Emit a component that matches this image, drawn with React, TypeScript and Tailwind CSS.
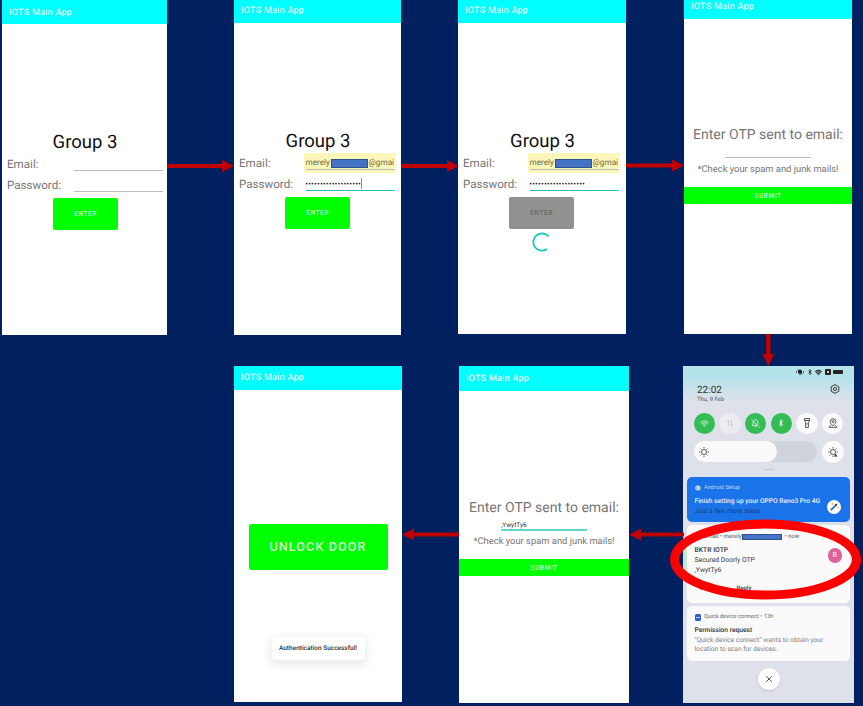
import React from "react";
import { Wifi, BellOff, Bluetooth, Settings, X } from "lucide-react";

const RED = "#c00000";

function AppBar({ className, children }: { className: string; children?: React.ReactNode }) {
  return (
    <div className={"bg-[#00ffff] pl-[7px] text-[9px] leading-[12px] font-medium tracking-[0.25px] text-[#dcfafa] " + className}>
      {children ?? "IOTS Main App"}
    </div>
  );
}

function Login({ bar, screen, filled, busy }: { bar: string; screen: string; filled?: boolean; busy?: boolean }) {
  return (
    <section className={"flex flex-col bg-white " + screen}>
      <AppBar className={bar} />
      <h1 className="mt-[106px] h-6 pl-[1px] text-center text-[18.5px] leading-6 text-[#111]">Group 3</h1>
      <div className="flex h-[21px] pl-[5px] text-[11.6px] leading-4 text-[#757575]">
        <div className="w-[65px] pt-[2px]">Email:</div>
        <div className={"h-5 w-[92px] px-[1.5px] " + (filled ? "bg-[#fcf6b8]" : "")}>
          <div className="flex h-[17px] items-center border-b border-[#bdbdbd] pt-[4px] text-[8.2px] text-[#6b684c]">
            {filled && (
              <>
                <span className="w-[25px]">merely</span>
                <span className="mr-px h-[9px] w-[37px] border border-[#2f528f] bg-[#4472c4]" />
                <span>@gmai</span>
              </>
            )}
          </div>
        </div>
      </div>
      <div className="flex h-[21px] pl-[5px] text-[11.6px] leading-4 text-[#757575]">
        <div className="w-[65px] pt-[2px]">Password:</div>
        <div className="h-5 w-[92px] px-[1.5px]">
          <div className={"flex h-[17px] items-center border-b pt-1 text-[6.5px] font-bold tracking-[0.6px] text-[#111] " + (filled ? "border-[#1fc4b6]" : "border-[#bdbdbd]")}>
            {filled && "•••••••••••••••••••"}
            {filled && !busy && <span className="-mt-0.5 h-[11px] w-px bg-[#1fc4b6]" />}
          </div>
        </div>
      </div>
      <button
        className={
          "mt-0.5 ml-[51px] h-8 w-[65px] rounded-[2px] pt-px text-[6.4px] font-medium tracking-[0.6px] " +
          (busy ? "bg-[#919191] text-[#666]" : "bg-[#00ff00] text-[#c8f7c8]")
        }
      >
        ENTER
      </button>
      {busy && (
        <svg className="mt-[3px] ml-[73px] size-5" viewBox="0 0 20 20" fill="none" stroke="#25c9b7" strokeWidth="1.9">
          <path d="M17.6 4.6A8.6 8.6 0 1 0 16 17" />
        </svg>
      )}
    </section>
  );
}

function Otp({ bar, screen, body, code }: { bar: string; screen: string; body: string; code?: string }) {
  return (
    <section className={"flex flex-col bg-white text-center whitespace-nowrap text-[#757575] " + screen}>
      <AppBar className={"text-left " + bar} />
      <h1 className={"h-[129px] text-[14px] leading-5 " + body}>Enter OTP sent to email:</h1>
      <div className="mx-auto h-[9px] w-[86px] text-left text-[6.5px] leading-[10px] text-[#333]">{code}</div>
      <div className={"mx-auto w-[86px] " + (code ? "h-0.5 bg-[#5fd6cc]" : "h-px bg-[#bdbdbd]")} />
      <p className={"h-[25px] text-[9.4px] leading-4 " + (code ? "mt-[3px]" : "mt-[4px]")}>*Check your spam and junk mails!</p>
      <button className="h-[17px] bg-[#00ff00] text-[6.5px] leading-[18px] font-medium tracking-[0.6px] text-[#c8f7c8]">SUBMIT</button>
    </section>
  );
}

function Unlock() {
  return (
    <section className="flex h-[336px] w-[168px] flex-col bg-white whitespace-nowrap">
      <AppBar className="h-6 pt-[6px]" />
      <button className="mt-[134px] ml-[14.5px] h-[46px] w-[139px] rounded-[2px] bg-[#00ff00] pt-px text-[12.5px] font-medium tracking-[1.15px] text-[#d5f5d5]">
        UNLOCK DOOR
      </button>
      <div className="mx-auto mt-[67px] h-[23px] w-[93px] rounded-[4px] bg-white text-center text-[6.5px] leading-[23px] font-medium text-[#333] shadow-[0_3px_8px_3px_rgba(0,0,0,0.07)]">
        Authentication Successful!
      </div>
    </section>
  );
}

function Toggle({ tone, children }: { tone: string; children: React.ReactNode }) {
  return <div className={"flex size-[21.5px] items-center justify-center rounded-full " + tone}>{children}</div>;
}

// Outline glyph on a 12-unit grid, in the stroke weight of the quick settings.
function Glyph({ size, d, children }: { size: number; d: string; children?: React.ReactNode }) {
  return (
    <svg width={size} height={size} viewBox="0 0 12 12" fill="none" stroke="currentColor" strokeWidth="0.95" strokeLinejoin="round">
      <path d={d} />
      {children}
    </svg>
  );
}

const SUN_RAYS = "M6 0v1.700M6 10.300V12M0 6h1.700M10.300 6H12M1.760 1.760l1.200 1.200M9.040 9.040l1.200 1.200M1.760 10.240l1.200-1.200M9.040 2.960l1.200-1.200";

function Notifications() {
  return (
    <section className="relative flex h-[337px] w-[171px] flex-col bg-[#dfe1ea] bg-linear-to-b from-[#b5e3ea] from-3% to-[#dfe1ea] to-11% px-1 whitespace-nowrap text-[#333]">
      <div className="absolute top-[180px] left-0 h-[32px] w-1 bg-[#c4e6d0]" />
      <div className="flex h-3 shrink-0 items-center justify-end gap-[2.5px] pr-[7px] text-[#222]">
        <svg width="8" height="6" viewBox="0 0 8 6" fill="#222">
          <path d="M2 4.500V2.500a2 2 0 0 1 4 0v2z" />
          <circle cx="4" cy="5.200" r=".8" />
          <path d="M.5 2v2M7.500 2v2M1.200.5l5.600 5" stroke="#222" strokeWidth=".7" />
        </svg>
        <Bluetooth size={6} strokeWidth={3} />
        <Wifi size={7} strokeWidth={3.5} />
        <span className="flex h-[5.5px] w-[6px] items-center justify-center rounded-[1px] bg-[#222]"><span className="size-0.5 rounded-full bg-white" /></span>
        <span className="h-[4.5px] w-[10px] rounded-[1px] bg-[#222]" />
      </div>
      <div className="mt-1 flex h-[29px] shrink-0 justify-between pr-[10.5px] pl-[10px]">
        <div>
          <div className="mt-[3px] text-[10px] leading-[11px]">22:02</div>
          <div className="text-[5.9px] leading-[9px] text-[#555]">Thu, 9 Feb</div>
        </div>
        <svg className="mt-0.5 size-[10px]" viewBox="0 0 10 10" fill="none" stroke="#333" strokeWidth="0.95">
          <path d="M5 .6l3.800 2.200v4.400L5 9.400 1.200 7.200V2.800z" strokeLinejoin="round" />
          <circle cx="5" cy="5" r="1.600" />
        </svg>
      </div>
      <div className="mt-[1.5px] flex justify-between pr-[6.5px] pl-[6.5px] text-[#333]">
        <Toggle tone="bg-[#34bd55] text-white"><Wifi size={9} /></Toggle>
        <Toggle tone="bg-[#ebecf1] text-[#b9bbc2]">
          <Glyph size={8} d="M4 10.500v-9L1.500 4.500M8 1.500v9l2.500-3" />
        </Toggle>
        <Toggle tone="bg-[#34bd55] text-white"><BellOff size={9} /></Toggle>
        <Toggle tone="bg-[#34bd55] text-white"><Bluetooth size={8} strokeWidth={2.5} /></Toggle>
        <Toggle tone="bg-[#fafafa]">
          <Glyph size={10} d="M3 .6h6v2.600l-1.300 2v6.200H4.300V5.200L3 3.200zM3 3h6M6 6v2" />
        </Toggle>
        <Toggle tone="bg-[#fafafa]">
          <Glyph size={10} d="M6 9.300C3.600 7.300 2.600 6 2.600 4.300a3.400 3.400 0 0 1 6.800 0C9.400 6 8.400 7.300 6 9.300zM3.200 8.600L1.400 11.200h9.200L8.800 8.600">
            <circle cx="6" cy="4.300" r="1.200" />
          </Glyph>
        </Toggle>
      </div>
      <div className="mt-[7px] flex items-center justify-between pr-[6.5px] pl-[6.5px]">
        <div className="h-[21px] w-[123px] overflow-hidden rounded-full bg-[#d1d3dc]">
          <div className="flex h-full w-[83px] items-center rounded-r-full bg-[#fafafa] pl-[5px]">
            <Glyph size={10} d={SUN_RAYS}><circle cx="6" cy="6" r="3" /></Glyph>
          </div>
        </div>
        <Toggle tone="bg-[#fafafa]">
          <Glyph size={10} d={SUN_RAYS}>
            <circle cx="6" cy="6" r="3" />
            <path d="M7 11.800l2-5 2.600 5z" fill="#333" stroke="#fafafa" strokeWidth=".5" />
          </Glyph>
        </Toggle>
      </div>
      <div className="mx-auto mt-[6px] h-px w-[10px] shrink-0 bg-[#c3c5cd]" />
      <article className="mt-[7px] flex h-[45px] shrink-0 justify-between rounded-[5px] bg-[#1a73e8] pr-[9px] pl-[7.5px] text-[6.65px] leading-[10px]">
        <div className="w-[125px]">
          <div className="mt-[7px] flex h-[9px] items-center gap-[3.5px] text-[5.7px] text-[#bcd6f9]">
            <Settings size={6} strokeWidth={4} className="text-white" />Android Setup
          </div>
          <div className="mt-[3px] font-medium text-[#e8f0fe]">Finish setting up your OPPO Reno3 Pro 4G</div>
          <div className="text-[6.7px] text-[#123f80]">Just a few more steps</div>
        </div>
        <div className="mt-[23px] flex size-[14px] shrink-0 items-center justify-center rounded-full bg-white">
          <svg width="11" height="11" viewBox="0 0 11 11" fill="none">
            <path d="M1.800 9.200l5.600-5.600" stroke="#3a6fc4" strokeWidth="1.900" />
            <path d="M6.600 4.400l1.200-1.200" stroke="#173f86" strokeWidth="1.900" />
            <path d="M3.500 2v2M2.500 3h2M9.300 5.800v1.800M8.400 6.700h1.800M9 1v1.400" stroke="#e0a92e" strokeWidth=".8" />
          </svg>
        </div>
      </article>
      <article className="mt-[3.5px] flex h-[78px] shrink-0 justify-between rounded-[5px] bg-[#fafafa] pr-[8px] pl-[7.5px] text-[6.8px] leading-[10px]">
        <div>
          <div className="mt-[7px] flex h-[9px] items-center pl-[8px] text-[6px] text-[#555]">
            <span className="w-[39px] text-right">Gmail • merely</span>
            <span className="h-[6px] w-[40px] border border-[#2f528f] bg-[#4472c4]" />
            <span className="pl-[3px]">• now</span>
          </div>
          <div className="mt-[3.5px] font-medium">BKTR IOTP</div>
          <div>Secured Doorly OTP</div>
          <div>,YwytTy6</div>
          <div className="mt-[9.5px] flex pl-[6px] text-[6px] font-medium"><span className="w-[36px]">Archive</span><span>Reply</span></div>
        </div>
        <div className="mt-[23px] size-[14.5px] rounded-full bg-[#e0609a] text-center text-[7px] leading-[14.5px] text-white">B</div>
      </article>
      <article className="mt-[2.5px] h-[55px] shrink-0 rounded-[5px] bg-[#fafafa] pl-[7.5px] text-[6.65px] leading-[9.7px] text-[#808080]">
        <div className="mt-[7.5px] flex h-[9px] items-center gap-[3px] text-[5.8px] text-[#666]">
          <span className="flex size-[6.5px] shrink-0 items-center justify-center rounded-[1.5px] bg-[#2f5fd6]"><span className="h-px w-[4px] bg-[#b9cbf5]" /></span>
          Quick device connect • 13h
        </div>
        <div className="mt-[4px] font-medium text-[#333]">Permission request</div>
        <div>"Quick device connect" wants to obtain your</div>
        <div>location to scan for devices.</div>
      </article>
      <div className="mx-auto mt-[7px] flex size-[22px] shrink-0 items-center justify-center rounded-full bg-white shadow-sm"><X size={10} /></div>
    </section>
  );
}

// Flow arrows between the screens and the highlight ring round the OTP mail.
function Flow() {
  return (
    <svg className="pointer-events-none absolute inset-0" width="863" height="706" fill={RED}>
      <path d="M167 164h55v-4l12 6-12 6v-4h-55z" />
      <path d="M401 164h46v-4l12 6-12 6v-4h-46z" />
      <path d="M626 163.500h46v-4l12 6-12 6v-4h-46z" />
      <path d="M766 334h4.500v20h4l-6.200 12-6.200-12h3.900z" />
      <path d="M684 532.500h-43v-4l-12 6 12 6v-4h43z" />
      <path d="M459 532.500h-45v-4l-12 6 12 6v-4h45z" />
      <ellipse cx="765.500" cy="559.500" rx="91" ry="35.500" fill="none" stroke="#ff0000" strokeWidth="9" />
    </svg>
  );
}

export default function App() {
  return (
    <main className="relative h-[706px] w-[863px] overflow-hidden bg-[#002060] font-['Roboto',sans-serif] [text-rendering:geometricPrecision]">
      <div className="flex h-[366px] items-start pl-0.5">
        <Login bar="h-6 pt-[7px]" screen="h-[335px] w-[165px]" />
        <div className="w-[67px]" />
        <Login bar="h-[23px] pt-[5px]" screen="h-[335px] w-[167px]" filled />
        <div className="w-[57px]" />
        <Login bar="h-[23px] pt-[5px]" screen="h-[334px] w-[168px]" filled busy />
        <div className="w-[58px]" />
        <Otp bar="h-[19px] pt-[1px]" screen="h-[334px] w-[168px]" body="pt-[106px]" />
      </div>
      <div className="flex items-start pl-[234px]">
        <Unlock />
        <div className="w-[57px]" />
        <Otp bar="h-[25px] pt-[7px]" screen="h-[337px] w-[170px]" body="pt-[107px]" code=",YwytTy6" />
        <div className="w-[54px]" />
        <Notifications />
      </div>
      <Flow />
    </main>
  );
}
